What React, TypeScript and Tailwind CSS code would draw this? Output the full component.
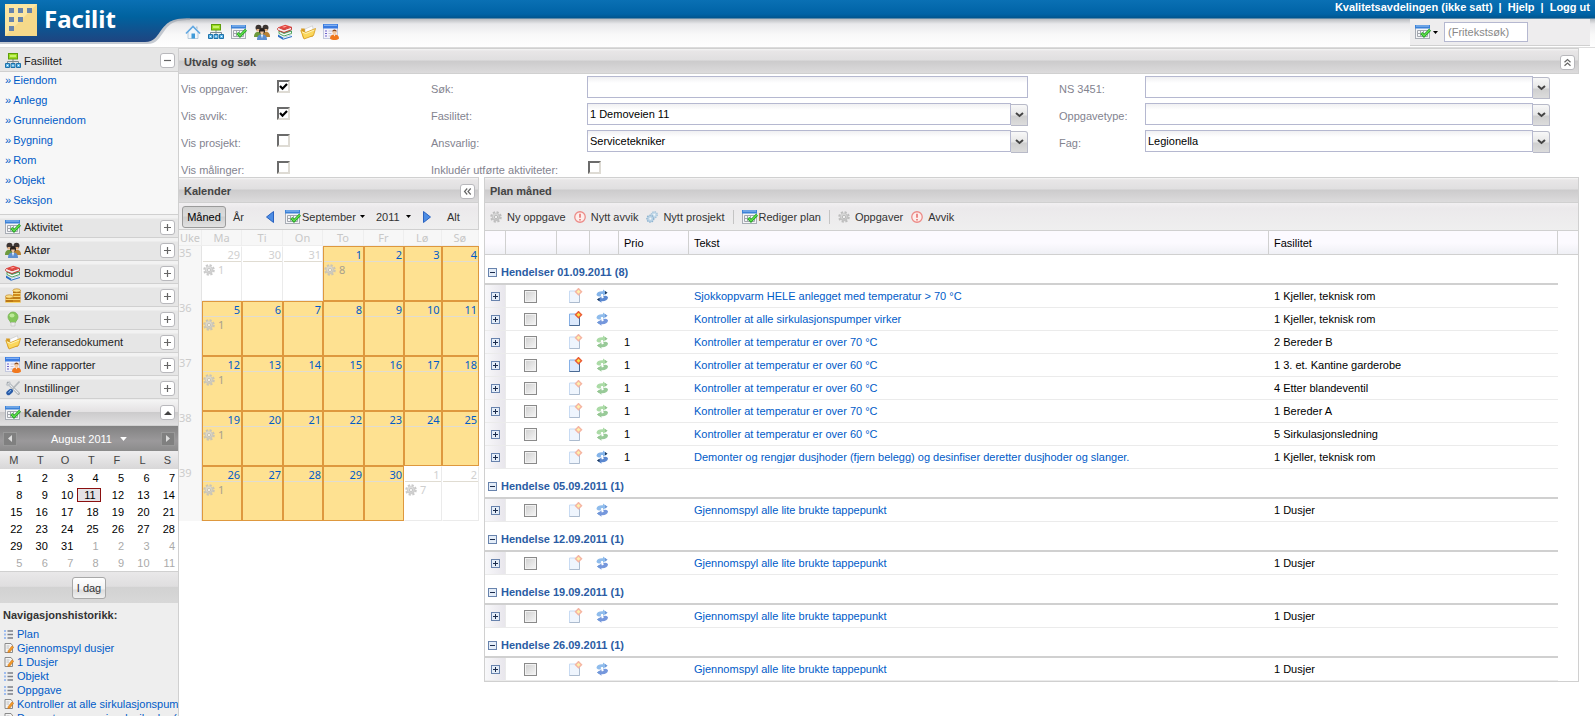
import React from 'react'

type IconProps = { className?: string }
type IconType = React.FC<IconProps>

const Icon: React.FC<{ className?: string; children: React.ReactNode }> = ({ className = 'w-4 h-4', children }) => (
  <svg viewBox="0 0 16 16" aria-hidden="true" className={`shrink-0 ${className}`}>{children}</svg>
)

const HomeIcon: IconType = () => (
  <Icon>
    <path d="M3 8v6.500h10V8L8 3z" fill="#f1f6fa" stroke="#a9c2d6" strokeWidth=".8" />
    <path d="M1 9.500 8 2.500l7 7" fill="none" stroke="#63a9e2" strokeWidth="1.700" />
    <rect x="6.500" y="9.500" width="3.500" height="5" fill="#3f9ad8" />
    <path d="M11 2.500h1.600v3L11 4z" fill="#b6c6d3" />
  </Icon>
)

const SitemapIcon: IconType = () => (
  <Icon>
    <path d="M8 6v4M2.500 11V8.500h11V11" fill="none" stroke="#7c8b93" />
    <rect x="3.500" y=".5" width="9" height="5.500" fill="#9bdc1e" stroke="#5f9e0c" />
    <path d="M5 2h6v2H5z" fill="#c6f26a" />
    <path d="M.5 10.500h4v4h-4zM6 10.500h4v4H6zM11.500 10.500h4v4h-4z" fill="#68bcec" stroke="#1f71a8" />
    <path d="M2 12h1v1H2zM7.500 12h1v1h-1zM13 12h1v1h-1z" fill="#fff" />
  </Icon>
)

const CalendarIcon: IconType = () => (
  <Icon>
    <rect x=".5" y="1.500" width="14" height="13" fill="#f4f5f7" stroke="#a8adb5" />
    <rect x="0" y="1" width="15" height="3.500" fill="#3c82d8" />
    <rect x="1" y="1.500" width="13" height="1" fill="#9cc5f3" />
    <path d="M2.500 6.500h10v6h-10zM2.500 9.500h10M5.500 6.500v6M8.500 6.500v6" fill="none" stroke="#a3a7ae" />
    <path d="m6.300 9 2.700 3 6-6.200" fill="none" stroke="#1d9a20" strokeWidth="2.800" />
    <path d="m6.600 9.200 2.400 2.500L14.700 6" fill="none" stroke="#62e34c" strokeWidth="1.300" />
  </Icon>
)

const PeopleIcon: IconType = () => (
  <Icon>
    <path d="M0 13c0-3 1-5 4-5s4 2 4 5z" fill="#6e9a3c" />
    <path d="M8 13c0-3 1-5 4-5s4 2 4 5z" fill="#b98232" />
    <circle cx="4.500" cy="3.800" r="3" fill="#3c3532" />
    <circle cx="11.500" cy="3.800" r="3" fill="#3c3532" />
    <path d="M2.500 5h3.500v2.500H2.500zM10 5h3.500v2.500H10z" fill="#e3b183" />
    <path d="M3 16c0-4 1.500-5.500 5-5.500s5 1.500 5 5.500z" fill="#5d8fd0" />
    <circle cx="8" cy="7" r="3" fill="#26201e" />
    <path d="M6.200 7.500h3.600c0 2-.8 3-1.800 3s-1.800-1-1.800-3z" fill="#f2c69c" />
    <path d="m7 10.800 1 3.700 1-3.700z" fill="#fff" />
  </Icon>
)

const BooksIcon: IconType = () => (
  <Icon>
    <path d="m1 10.500 5 3 9-2.700v2.200l-9 2.800-5-3z" fill="#2a6fc4" />
    <path d="m6 13.500 9-2.700v1.200l-9 2.700z" fill="#e8f1fb" />
    <path d="m2 7 5 2.500 7.500-2.500v2.500L7 12 2 9.500z" fill="#fafafa" stroke="#27913a" strokeWidth=".8" />
    <path d="m2 6.800 7-2 5.500 2L7 9.300z" fill="#3c9b6a" />
    <path d="M1.500 3.500C0 4.500.5 6 1.500 6.500L7 8.500l7.500-2.800V3.200L7 5.800z" fill="#f8eeee" stroke="#c22b28" strokeWidth=".9" />
    <path d="m1.200 3.300 7-2.500 6.300 2-7.500 3z" fill="#e0453f" />
    <path d="m5 2.900 3-1 2 .6-3 1.100z" fill="#ffb0a8" />
  </Icon>
)

const FolderIcon: IconType = () => (
  <Icon>
    <path d="M1 4.500h3.500L6 6l6-2.500 1 9L3 14z" fill="#d79a20" />
    <path d="m5 5 7.500-3.200 1 5.700L5 11z" fill="#fdfdfd" stroke="#b9b9b9" strokeWidth=".5" />
    <path d="m.8 6.500 5 2L15.500 4.500 13.500 11.500l-9.500 3.500z" fill="#fbd75c" stroke="#d59a1c" strokeWidth=".8" />
    <path d="M2 7.800 5.800 9.500 14.300 6" fill="none" stroke="#fff3b8" />
  </Icon>
)

const ReportIcon: IconType = () => (
  <Icon>
    <rect x=".5" y=".5" width="14" height="14" fill="#f3f2fb" stroke="#c3c9de" />
    <path d="M0 0h15v4.500H0z" fill="#3a7be0" />
    <path d="M1 .7h13v1.200H1z" fill="#8bb7f5" />
    <path d="M2 7h2M2 9.500h2M2 12h2" stroke="#6d62c9" />
    <path d="M5.500 7h4M5.500 9.500h3M5.500 12h3" stroke="#c6c4d6" />
    <circle cx="11.500" cy="8" r="2.200" fill="#f5c9a0" />
    <path d="M9.300 7.500c0-2.800 4.400-2.800 4.400 0-1.500-.8-2.900-.8-4.400 0z" fill="#8a4a20" />
    <path d="M7 14.500c0-2.800 1.500-4 4.500-4s4.500 1.200 4.500 4c-2 2-7 2-9 0z" fill="#f0781e" />
    <path d="m10.700 10.500.8 2 .8-2z" fill="#fff" />
  </Icon>
)

const CoinsIcon: IconType = () => (
  <Icon>
    <path d="M8 2.500v12h7.500v-12z" fill="#d08c1c" />
    <path d="M.5 8.500v6H8v-6z" fill="#c98518" />
    <path d="M8 5.500h7.500M8 8.500h7.500M8 11.500h7.500M.5 11.500H8M.5 14.500h15" stroke="#f8d773" />
    <path d="M8 4.500h7.500M8 10h7.500M.5 13H8" stroke="#9a5d10" strokeWidth=".6" />
    <ellipse cx="11.700" cy="2.500" rx="3.800" ry="1.700" fill="#fbe08a" stroke="#b97a18" strokeWidth=".6" />
    <ellipse cx="4.200" cy="8.500" rx="3.800" ry="1.700" fill="#fbe08a" stroke="#b97a18" strokeWidth=".6" />
  </Icon>
)

const BulbIcon: IconType = () => (
  <Icon>
    <path d="M8 1a5 5 0 0 0-5 5c0 2.500 2 3.500 2.600 5.500h4.800C11 9.500 13 8.500 13 6a5 5 0 0 0-5-5z" fill="#84c65a" stroke="#79b357" strokeWidth=".8" />
    <ellipse cx="7" cy="4.500" rx="2.500" ry="2" fill="#bdea98" />
    <path d="M6 11.500h4V15H6z" fill="#ececec" stroke="#c0c0c0" strokeWidth=".6" />
  </Icon>
)

const ToolsIcon: IconType = () => (
  <Icon>
    <path d="m3 3 10.500 10.500" stroke="#9da3a8" strokeWidth="2.600" strokeLinecap="round" />
    <path d="m3 3 10.500 10.500" stroke="#eceef0" strokeWidth="1.200" />
    <path d="M.8 4.500C1.500 6.500 4 6.800 5.200 5.500 6.500 4 6 1.800 4 1v2.600H1z" fill="#c3c8cc" />
    <path d="m14.500 1.500-8 8.500" stroke="#b2b7bb" strokeWidth="1.800" />
    <path d="m5.800 11-2.300 2" stroke="#2a5ca8" strokeWidth="4.400" strokeLinecap="round" />
    <path d="m6 10-2.500 3" stroke="#8cbcf0" strokeWidth="1" />
  </Icon>
)

const GearIcon: IconType = ({ className }) => (
  <Icon className={className}>
    <circle cx="8" cy="8" r="6.200" fill="none" stroke="#bdbdbd" strokeWidth="3" strokeDasharray="2.800 2.070" />
    <circle cx="8" cy="8" r="5.600" fill="#c2c2c2" />
    <circle cx="7.500" cy="7" r="4" fill="#d6d6d6" />
    <circle cx="8" cy="8" r="2.200" fill="#f1f1f1" stroke="#a3a3a3" strokeWidth=".8" />
  </Icon>
)

const GearsIcon: IconType = ({ className }) => (
  <Icon className={className}>
    <circle cx="11" cy="5" r="4" fill="#c6dbea" stroke="#a4c3da" strokeWidth="1.800" strokeDasharray="1.800 1.340" />
    <circle cx="11" cy="5" r="1.300" fill="#f2f7fa" />
    <circle cx="5.800" cy="10.300" r="4.600" fill="#b9d2e5" stroke="#8fb4d0" strokeWidth="1.800" strokeDasharray="1.900 1.398" />
    <circle cx="5.800" cy="10.300" r="1.500" fill="#f2f7fa" />
  </Icon>
)

const AlertIcon: IconType = ({ className }) => (
  <Icon className={className}>
    <circle cx="8" cy="8" r="7" fill="#fdeeec" stroke="#ec8b88" strokeWidth="1.700" />
    <path d="M8 3.500v5.500M8 10.500v2" stroke="#e86a66" strokeWidth="2" />
  </Icon>
)

const NoteIcon: React.FC<{ active?: boolean }> = ({ active }) => (
  <Icon className={active ? 'w-4 h-4' : 'w-4 h-4 opacity-45'}>
    <path d="M2.500 3h10v11.500h-10z" fill="#dce9fc" stroke="#86b0e6" />
    <path d="M12.500 5v9.500h-10" fill="none" stroke="#4a6a94" />
    <path d="m11.500-.3 4 4-4 4-4-4z" fill="#ea5a34" />
    <path d="m11.500 1.700 2 2-2 2-2-2z" fill="#ffe04a" />
  </Icon>
)

type SyncKind = 'dark' | 'blue' | 'green'

const SYNC_COLORS: Record<SyncKind, [string, string, string]> = {
  dark: ['#84b4ea', '#5b88d0', '#1f3a5c'],
  blue: ['#8fbcec', '#7597dc', '#6f98d8'],
  green: ['#abdba6', '#98ca98', '#93c490'],
}

const SyncIcon: React.FC<{ kind: SyncKind }> = ({ kind }) => {
  const [top, bottom, tip] = SYNC_COLORS[kind]
  return (
    <Icon className="w-4 h-4">
      <path d="M2.500 6.500C3 3.800 5.500 3 9 3.200V1.500l4.500 3.300L9 7.800V6c-2 0-3 .6-1.500 2.300L5 8.500C3.500 8.300 2.500 7.500 2.500 6.500z" fill={top} />
      <path d="M14 9.800c-.5 2.700-3 3.500-6.500 3.300v1.700L3 11.500l4.500-3v1.800c2 0 3-.6 1.500-2.300l2.500-.2c1.500.2 2.500 1 2.500 2z" fill={bottom} />
      <path d="m11 3 2.500 1.800L11 6.500zM5.500 9.800 3 11.500l2.500 1.800z" fill={tip} />
    </Icon>
  )
}

const ListIcon: IconType = () => (
  <svg viewBox="0 0 10 10" aria-hidden="true" className="w-[10px] h-[10px] shrink-0">
    <path d="M0 1h2v2H0zM0 4.500h2v2H0zM0 8h2v2H0z" fill="#9dbcf0" />
    <path d="M3.500 2H9M3.500 5.500H9M3.500 9H9" stroke="#7c7f88" strokeWidth="1.300" />
  </svg>
)

const EditIcon: IconType = () => (
  <svg viewBox="0 0 10 10" aria-hidden="true" className="w-[10px] h-[10px] shrink-0">
    <path d="M1 .5h6l1.500 2v7H1z" fill="#f4f4f4" stroke="#8b8b8b" />
    <path d="M2.500 3h3M2.500 5h2.500" stroke="#b0b0b0" strokeWidth=".8" />
    <path d="m4 7.800 4-5 1.800 1.400-4 5-2 .6z" fill="#f29a2a" stroke="#b8661a" strokeWidth=".4" />
  </svg>
)

const ExpandIcon: React.FC<{ open?: boolean }> = ({ open }) => (
  <svg viewBox="0 0 9 9" aria-hidden="true" className="w-[9px] h-[9px] shrink-0">
    <rect x=".5" y=".5" width="8" height="8" fill="#e4edf8" stroke="#6883ad" />
    <path d={open ? 'M2 4.500h5' : 'M2 4.500h5M4.500 2v5'} stroke="#1b2c4d" />
  </svg>
)

const Caret: React.FC<{ className?: string }> = ({ className = 'w-[5px] h-[3px]' }) => (
  <svg viewBox="0 0 5 3" aria-hidden="true" className={className}><path d="M0 0h5L2.500 3z" fill="currentColor" /></svg>
)

const Arrow: React.FC<{ flip?: boolean }> = ({ flip }) => (
  <svg viewBox="0 0 8 12" aria-hidden="true" className="w-2 h-3">
    <path d={flip ? 'M.5.5v11l7-5.500z' : 'M7.500.5v11L.5 6z'} fill="#4d8de4" stroke="#2a62c0" />
  </svg>
)

const toolButton = 'flex items-center justify-center w-[15px] h-[15px] shrink-0 rounded-[3px] border border-[#b8b8bc] bg-white text-[#666]'

const ToolButton: React.FC<{ label: string; d: string }> = ({ label, d }) => (
  <button type="button" aria-label={label} className={toolButton}>
    <svg viewBox="0 0 9 9" aria-hidden="true" className="w-[9px] h-[9px]"><path d={d} fill="none" stroke="currentColor" strokeWidth="1.200" /></svg>
  </button>
)

const PLUS = 'M1 4.500h7M4.500 1v7'
const MINUS = 'M1 4.500h7'
const UP = 'M1.500 4.200l3-2.700 3 2.700M1.500 7.700l3-2.700 3 2.700'
const LEFT = 'M4.200 1.500l-2.700 3 2.700 3M7.700 1.500l-2.700 3 2.700 3'

const panelHead = 'flex items-center justify-between h-[26px] pt-[2px] pl-[5px] pr-[3px] border-t border-b border-[#d0d0d0] text-[#444] font-bold bg-[linear-gradient(#f6f6f6_0,#e8e6e7_8%,#e0dfe0_46%,#cccbcc_50%,#dcdbdc_100%)]'

const MODULES: { name: string; icon: IconType }[] = [
  { name: 'Aktivitet', icon: CalendarIcon },
  { name: 'Aktør', icon: PeopleIcon },
  { name: 'Bokmodul', icon: BooksIcon },
  { name: 'Økonomi', icon: CoinsIcon },
  { name: 'Enøk', icon: BulbIcon },
  { name: 'Referansedokument', icon: FolderIcon },
  { name: 'Mine rapporter', icon: ReportIcon },
  { name: 'Innstillinger', icon: ToolsIcon },
]

const LINKS = ['Eiendom', 'Anlegg', 'Grunneiendom', 'Bygning', 'Rom', 'Objekt', 'Seksjon']

const HISTORY: { text: string; icon: IconType }[] = [
  { text: 'Plan', icon: ListIcon },
  { text: 'Gjennomspyl dusjer', icon: EditIcon },
  { text: '1 Dusjer', icon: EditIcon },
  { text: 'Objekt', icon: ListIcon },
  { text: 'Oppgave', icon: ListIcon },
  { text: 'Kontroller at alle sirkulasjonspum', icon: EditIcon },
  { text: 'Demonter og rengjør dusjhoder (', icon: EditIcon },
]

type Event = { note?: boolean; sync: SyncKind; prio?: string; text: string; place: string }

const GROUPS: { title: string; rows: Event[] }[] = [
  {
    title: 'Hendelser 01.09.2011 (8)',
    rows: [
      { sync: 'dark', text: 'Sjokkoppvarm HELE anlegget med temperatur > 70 °C', place: '1 Kjeller, teknisk rom' },
      { note: true, sync: 'blue', text: 'Kontroller at alle sirkulasjonspumper virker', place: '1 Kjeller, teknisk rom' },
      { sync: 'green', prio: '1', text: 'Kontroller at temperatur er over 70 °C', place: '2 Bereder B' },
      { note: true, sync: 'green', prio: '1', text: 'Kontroller at temperatur er over 60 °C', place: '1 3. et. Kantine garderobe' },
      { sync: 'green', prio: '1', text: 'Kontroller at temperatur er over 60 °C', place: '4 Etter blandeventil' },
      { sync: 'green', prio: '1', text: 'Kontroller at temperatur er over 70 °C', place: '1 Bereder A' },
      { sync: 'green', prio: '1', text: 'Kontroller at temperatur er over 60 °C', place: '5 Sirkulasjonsledning' },
      { sync: 'dark', prio: '1', text: 'Demonter og rengjør dusjhoder (fjern belegg) og desinfiser deretter dusjhoder og slanger.', place: '1 Kjeller, teknisk rom' },
    ],
  },
  { title: 'Hendelse 05.09.2011 (1)', rows: [{ sync: 'blue', text: 'Gjennomspyl alle lite brukte tappepunkt', place: '1 Dusjer' }] },
  { title: 'Hendelse 12.09.2011 (1)', rows: [{ sync: 'blue', text: 'Gjennomspyl alle lite brukte tappepunkt', place: '1 Dusjer' }] },
  { title: 'Hendelse 19.09.2011 (1)', rows: [{ sync: 'blue', text: 'Gjennomspyl alle lite brukte tappepunkt', place: '1 Dusjer' }] },
  { title: 'Hendelse 26.09.2011 (1)', rows: [{ sync: 'blue', text: 'Gjennomspyl alle lite brukte tappepunkt', place: '1 Dusjer' }] },
]

// September 2011 starts on a Thursday, so the first cell is 29 August
const WEEKS = [35, 36, 37, 38, 39].map((week, w) => ({
  week,
  days: Array.from({ length: 7 }, (_, d) => {
    const n = w * 7 + d - 2
    if (n < 1) return { n: n + 31, inMonth: false, count: n === -2 ? 1 : 0 }
    if (n > 30) return { n: n - 30, inMonth: false, count: n === 31 ? 7 : 0 }
    return { n, inMonth: true, count: n === 1 ? 8 : d === 0 ? 1 : 0 }
  }),
}))

const Header = () => (
  <header className="relative h-12 shrink-0 border-b border-[#dcdcdc] bg-[linear-gradient(#0a70b4_0,#0063a6_14px,#00558f_18px,#b9bcc0_19px,#e9e9eb_24px,#f8f8f8_34px,#fff_100%)]">
    <svg viewBox="0 0 190 48" aria-hidden="true" className="absolute left-0 top-0 w-[190px] h-12">
      <defs>
        <linearGradient id="brand" x1="0" y1="0" x2="0" y2="1">
          <stop offset="0" stopColor="#0a70b4" />
          <stop offset=".4" stopColor="#00629f" />
          <stop offset="1" stopColor="#1f4480" />
        </linearGradient>
      </defs>
      <path d="M0 0h190v20c-17 0-20 4-25 10-6 8-8 14-18 14H0z" fill="#8f99a8" opacity=".5" />
      <path d="M0 0h190v18c-18 0-22 4-28 11-5 7-8 13-17 13H0z" fill="url(#brand)" />
      <rect x="5" y="4" width="32" height="32" fill="#fbe6a2" />
      <path d="M5 36 37 4v32z" fill="#f5d98a" />
      <path d="M9 8h5v5H9zM18 8h5v5h-5zM27 8h5v5h-5zM9 17h5v5H9zM18 17h5v5h-5zM9 26h5v5H9z" fill="#6784ac" />
    </svg>
    <div className="relative flex justify-between">
      <div className="flex">
        <a href="#" className="w-[185px] pl-11 pt-[3px] text-2xl leading-8 font-bold text-white font-['Noto_Sans',sans-serif]">Facilit</a>
        <nav className="flex gap-[7px] pt-6">
          {[HomeIcon, SitemapIcon, CalendarIcon, PeopleIcon, BooksIcon, FolderIcon, ReportIcon].map((I, i) => (
            <a key={i} href="#"><I /></a>
          ))}
        </nav>
      </div>
      <div className="flex flex-col items-end pr-[5px]">
        <div className="flex gap-[6px] h-[19px] leading-[15px] font-bold text-white">
          <a href="#">Kvalitetsavdelingen (ikke satt)</a>
          <span>|</span>
          <a href="#">Hjelp</a>
          <span>|</span>
          <a href="#">Logg ut</a>
        </div>
        <div className="flex items-center w-[180px] h-[27px] pl-[5px] bg-[#eeedee] border-b border-[#d0d0d0]">
          <button type="button" aria-label="Velg søk" className="flex items-center gap-[2px]"><CalendarIcon /><Caret /></button>
          <input aria-label="Fritekstsøk" placeholder="(Fritekstsøk)" className="ml-[6px] w-[84px] h-5 px-[3px] bg-white border border-[#b5b8d0] placeholder:text-[#888] placeholder:opacity-100" />
        </div>
      </div>
    </div>
  </header>
)

const MiniCalendar = () => {
  const days = Array.from({ length: 42 }, (_, i) => (i < 31 ? i + 1 : i - 30))
  return (
    <section>
      <div className="flex items-center gap-[3px] h-[26px] pl-[5px] pr-[3px] border-b border-[#d0d0d0] font-bold text-[#444] bg-[linear-gradient(#f4f4f4_0,#e4e2e3_46%,#cccbcc_50%,#e0dfe0_100%)]">
        <CalendarIcon />
        <span className="flex-1">Kalender</span>
        <button type="button" aria-label="Skjul kalender" className={toolButton}>
          <svg viewBox="0 0 8 4" aria-hidden="true" className="w-2 h-1"><path d="M0 4h8L4 0z" fill="#444" /></svg>
        </button>
      </div>
      <div className="flex items-center justify-between h-[25px] px-[3px] text-white bg-[linear-gradient(#828282,#9b999b_60%,#8b8b8b)]">
        <button type="button" aria-label="Forrige måned" className="flex items-center justify-center w-[14px] h-[14px] border border-[#999] bg-[#808080]">
          <svg viewBox="0 0 4 7" aria-hidden="true" className="w-1 h-[7px]"><path d="M4 0v7L0 3.500z" fill="#ddd" /></svg>
        </button>
        <button type="button" className="flex items-center gap-2">August 2011 <Caret className="w-[7px] h-1" /></button>
        <button type="button" aria-label="Neste måned" className="flex items-center justify-center w-[14px] h-[14px] border border-[#999] bg-[#808080]">
          <svg viewBox="0 0 4 7" aria-hidden="true" className="w-1 h-[7px]"><path d="M0 0v7l4-3.500z" fill="#ddd" /></svg>
        </button>
      </div>
      <table className="w-full table-fixed bg-white text-right">
        <thead>
          <tr className="h-[18px] bg-[linear-gradient(#efeeef,#d8d7d8)] text-[#444]">
            {['M', 'T', 'O', 'T', 'F', 'L', 'S'].map((d, i) => <th key={i} className="p-0 pr-[7px] font-normal">{d}</th>)}
          </tr>
        </thead>
        <tbody>
          {[0, 1, 2, 3, 4, 5].map((w) => (
            <tr key={w} className="h-[17px]">
              {days.slice(w * 7, w * 7 + 7).map((n, d) => {
                const i = w * 7 + d
                return (
                  <td key={d} className={`p-0 px-px ${i > 30 ? 'text-[#aaa]' : 'text-black'}`}>
                    <a href="#" className={i === 10 ? 'block pr-[4px] leading-3 border border-[#8b1010] bg-[#e4e2e5]' : 'block pr-[2px] leading-[14px]'}>{n}</a>
                  </td>
                )
              })}
            </tr>
          ))}
        </tbody>
      </table>
      <div className="flex justify-center items-center h-8 pt-px border-t border-[#d0d0d0] bg-[linear-gradient(#e9e8e9_0,#dfdedf_46%,#d2d2d2_50%,#d8d8d8_100%)]">
        <button type="button" className="h-[22px] px-1 rounded-[3px] border border-[#a8a8a8] text-[#333] bg-[linear-gradient(#fff,#f2f2f2_55%,#dcdcdc_60%,#f0f0f0)]">I dag</button>
      </div>
    </section>
  )
}

const Sidebar = () => (
  <aside className="w-[179px] shrink-0 overflow-hidden border-r border-[#d0d0d0] bg-[#eee]">
    <div className="flex items-center gap-[3px] h-6 pt-[2px] pl-[5px] pr-[3px] bg-[#e6e6e6] border-b border-[#d0d0d0] text-[#222]">
      <SitemapIcon />
      <span className="flex-1">Fasilitet</span>
      <ToolButton label="Skjul" d={MINUS} />
    </div>
    <ul className="h-[142px] bg-[#f7f7f7]">
      {LINKS.map((l) => (
        <li key={l} className="h-5 pl-[5px] leading-4 text-[#005bc8]"><a href="#" className="flex gap-[2px]"><span>»</span><span>{l}</span></a></li>
      ))}
    </ul>
    {MODULES.map(({ name, icon: I }) => (
      <div key={name} className="flex items-center gap-[3px] h-[23px] pt-[2px] pl-[5px] pr-[3px] border-t border-[#d0d0d0] bg-[linear-gradient(#f2f2f2_3px,#e6e6e6_4px)] text-[#222]">
        <I />
        <span className="flex-1">{name}</span>
        <ToolButton label={`Vis ${name}`} d={PLUS} />
      </div>
    ))}
    <div className="border-t border-[#d0d0d0] pt-px">
      <MiniCalendar />
    </div>
    <h2 className="pl-[3px] pt-[5px] leading-[15px] font-bold text-[#333]">Navigasjonshistorikk:</h2>
    <ul className="pt-1">
      {HISTORY.map(({ text, icon: I }) => (
        <li key={text} className="h-[14px] leading-[14px] text-[#005bc8]">
          <a href="#" className="flex items-center gap-[3px] pl-1 whitespace-nowrap"><I />{text}</a>
        </li>
      ))}
    </ul>
  </aside>
)

const CheckField: React.FC<{ id: string; label: string; checked?: boolean; wide?: boolean }> = ({ id, label, checked, wide }) => (
  <div className="flex h-[27px]">
    <label htmlFor={id} className={`pt-[7px] text-[#83838f] ${wide ? 'w-[157px]' : 'w-24'}`}>{label}</label>
    <span className="relative w-[13px] h-[13px] mt-[5px]">
      <input id={id} type="checkbox" defaultChecked={checked} className="peer block appearance-none w-[13px] h-[13px] bg-white border-2 border-t-[#6b6b6b] border-l-[#6b6b6b] border-r-[#dedbd4] border-b-[#dedbd4]" />
      <svg viewBox="0 0 13 13" aria-hidden="true" className="hidden peer-checked:block absolute inset-0 pointer-events-none"><path d="M3 6l2.500 2.700L10 4" fill="none" stroke="#000" strokeWidth="2.200" /></svg>
    </span>
  </div>
)

const field = 'min-w-0 flex-1 h-[22px] px-[2px] appearance-none rounded-none border border-[#b5b8d0] bg-[linear-gradient(#f0f0f2,#fff_6px)] text-black'

const SelectField: React.FC<{ id: string; label: string; value?: string; narrow?: boolean }> = ({ id, label, value = '', narrow }) => (
  <div className="flex h-[27px]">
    <label htmlFor={id} className={`shrink-0 pt-[7px] text-[#83838f] ${narrow ? 'w-[86px]' : 'w-[156px]'}`}>{label}</label>
    <select id={id} defaultValue={value} className={`${field} mt-px`}>
      <option>{value}</option>
    </select>
    <span className="flex items-center justify-center w-[17px] h-[22px] mt-[2px] border border-l-0 border-[#b8bac8] rounded-tr-[3px] bg-[linear-gradient(#f8f8f8,#e6e6e6_50%,#cfcfcf_55%,#dcdcdc)]">
      <svg viewBox="0 0 9 6" aria-hidden="true" className="w-[9px] h-[6px]"><path d="m1 1 3.500 3L8 1" fill="none" stroke="#444" strokeWidth="2" /></svg>
    </span>
  </div>
)

const SearchPanel = () => (
  <section className="h-[129px]">
    <h2 className={`${panelHead} border-r`}>Utvalg og søk <ToolButton label="Skjul søk" d={UP} /></h2>
    <div className="flex pt-px pl-[2px] pr-[29px]">
      <div className="w-[250px]">
        <CheckField id="oppgaver" label="Vis oppgaver:" checked />
        <CheckField id="avvik" label="Vis avvik:" checked />
        <CheckField id="prosjekt" label="Vis prosjekt:" />
        <CheckField id="malinger" label="Vis målinger:" />
      </div>
      <div className="flex-[597] min-w-0">
        <div className="flex h-[27px]">
          <label htmlFor="sok" className="w-[156px] shrink-0 pt-[7px] text-[#83838f]">Søk:</label>
          <input id="sok" className={`${field} mt-px`} />
        </div>
        <SelectField id="fasilitet" label="Fasilitet:" value="1 Demoveien 11" />
        <SelectField id="ansvarlig" label="Ansvarlig:" value="Servicetekniker" />
        <CheckField id="utforte" label="Inkludér utførte aktiviteter:" wide />
      </div>
      <div className="flex-[491] min-w-0 ml-[31px]">
        <SelectField id="ns" label="NS 3451:" narrow />
        <SelectField id="type" label="Oppgavetype:" narrow />
        <SelectField id="fag" label="Fag:" value="Legionella" narrow />
      </div>
    </div>
  </section>
)

const toolbar = 'flex items-center border-b border-[#d0d0d0] bg-[linear-gradient(#f2f0f2,#ebe9eb_5px,#efefef)] text-[#333]'

const CalendarPanel = () => (
  <section className="w-[300px] shrink-0">
    <div className="border-r border-[#d0d0d0]">
      <h2 className={panelHead}>Kalender <ToolButton label="Skjul kalender" d={LEFT} /></h2>
      <div className={`${toolbar} h-[27px] pt-px pl-[3px]`}>
        <button type="button" className="w-11 h-[22px] rounded-[3px] border border-[#9b9b9b] bg-[linear-gradient(#d2d2d2,#dcdcdc_45%,#cecece_50%,#e2e2e2)] text-black">Måned</button>
        <button type="button" className="ml-[7px] w-[33px] text-left">År</button>
        <button type="button" aria-label="Forrige" className="w-[19px]"><Arrow /></button>
        <button type="button" className="flex items-center gap-px w-[91px]"><CalendarIcon />September <Caret className="w-[5px] h-[3px] ml-[3px] text-black" /></button>
        <button type="button" className="flex items-center gap-[6px] w-[47px]">2011 <Caret className="w-[5px] h-[3px] text-black" /></button>
        <button type="button" aria-label="Neste" className="w-6"><Arrow flip /></button>
        <button type="button">Alt</button>
      </div>
    </div>
    <table className="w-full table-fixed border-separate border-spacing-0 font-['Noto_Sans',sans-serif]">
      <colgroup>
        <col className="w-[23px]" />
        <col className="w-[40px]" />
        <col className="w-[41px]" />
        <col className="w-[40px]" />
        <col className="w-[41px]" />
        <col className="w-[40px]" />
        <col />
        <col />
      </colgroup>
      <thead>
        <tr className="h-4 bg-[#f7f7f7] text-[#c8c8c8]">
          {['Uke', 'Ma', 'Ti', 'On', 'To', 'Fr', 'Lø', 'Sø'].map((d) => <th key={d} className="p-0 font-normal leading-[15px] border-r border-b border-[#eee]">{d}</th>)}
        </tr>
      </thead>
      <tbody>
        {WEEKS.map(({ week, days }) => (
          <tr key={week} className="h-[55px] align-top">
            <td className="p-0 bg-[#f7f7f7] text-[#ccc] leading-[13px] border-r border-[#e4e4e4]">{week}</td>
            {days.map(({ n, inMonth, count }) => (
              <td key={n} className={`p-0 border ${inMonth ? 'border-[#de983e] bg-[#fee191]' : 'border-t-transparent border-l-transparent border-[#ebebeb] bg-white'}`}>
                <div className={`h-[15px] pr-px text-right leading-4 border-b border-[#e0dcd2] ${inMonth ? 'text-[#005bc8]' : 'text-[#d0d0d0]'}`}>{n}</div>
                {count > 0 && (
                  <div className={`flex items-center gap-[3px] leading-[15px] ${inMonth ? 'text-[#a8a08c]' : 'text-[#cfcfcf]'}`}><GearIcon className="w-3 h-3 opacity-80" />{count}</div>
                )}
              </td>
            ))}
          </tr>
        ))}
      </tbody>
    </table>
  </section>
)

const Separator = () => <span className="w-px h-[14px] bg-[#c4c4c4]" />

const ActionButton: React.FC<{ label: string; icon: IconType }> = ({ label, icon: I }) => (
  <button type="button" className="flex items-center gap-[5px]"><I className="w-3 h-3" />{label}</button>
)

const PlanPanel = () => (
  <section className="min-w-0 flex-1 ml-[5px] self-start border border-t-0 border-[#d0d0d0]">
    <h2 className={panelHead}>Plan måned</h2>
    <div className={`${toolbar} gap-2 h-[28px] pl-[5px]`}>
      <ActionButton label="Ny oppgave" icon={GearIcon} />
      <ActionButton label="Nytt avvik" icon={AlertIcon} />
      <ActionButton label="Nytt prosjekt" icon={GearsIcon} />
      <Separator />
      <button type="button" className="flex items-center gap-px"><CalendarIcon />Rediger plan</button>
      <Separator />
      <ActionButton label="Oppgaver" icon={GearIcon} />
      <ActionButton label="Avvik" icon={AlertIcon} />
    </div>
    <table className="w-full table-fixed border-separate border-spacing-0">
      <colgroup>
        <col className="w-[21px]" />
        <col className="w-[51px]" />
        <col className="w-[33px]" />
        <col className="w-[29px]" />
        <col className="w-[70px]" />
        <col />
        <col className="w-[289px]" />
        <col className="w-[20px]" />
      </colgroup>
      <thead>
        <tr className="h-6 text-left bg-[linear-gradient(#fcfaff_50%,#eeeff4)]">
          {['', '', '', '', 'Prio', 'Tekst', 'Fasilitet', ''].map((h, i) => (
            <th key={i} className={`p-0 pl-[5px] font-normal border-b border-[#d0d0d0] ${i < 7 ? 'border-r' : ''}`}>{h}</th>
          ))}
        </tr>
      </thead>
      {GROUPS.map(({ title, rows }) => (
        <tbody key={title}>
          <tr className="h-[30px]">
            <th colSpan={7} className="p-0 pl-[3px] pt-[6px] text-left text-[#2a5ca4] border-b-2 border-[#d0d0d0]">
              <button type="button" className="flex items-center gap-1 font-bold"><ExpandIcon open />{title}</button>
            </th>
            <td />
          </tr>
          {rows.map((row, i) => (
            <tr key={i} className="h-[23px] [&>td]:p-0 [&>td:not(:last-child)]:border-b [&>td]:border-[#ebebeb]">
              <td className="border-r bg-[linear-gradient(to_right,#f8f8fa,#e8e6ec)]"><button type="button" aria-label="Vis detaljer" className="block mx-auto"><ExpandIcon /></button></td>
              <td><input type="checkbox" aria-label={row.text} className="block ml-[18px] appearance-none w-[13px] h-[13px] border border-[#8a8a8a] bg-[linear-gradient(135deg,#cfcfcf,#f6f6f6)] shadow-[inset_0_0_0_1px_#f2f2f2]" /></td>
              <td><div className="ml-[10px]"><NoteIcon active={row.note} /></div></td>
              <td><div className="ml-1"><SyncIcon kind={row.sync} /></div></td>
              <td><span className="pl-[5px]">{row.prio}</span></td>
              <td className="truncate"><a href="#" className="pl-[5px] text-[#005bc8]">{row.text}</a></td>
              <td><span className="pl-[5px]">{row.place}</span></td>
              <td />
            </tr>
          ))}
        </tbody>
      ))}
    </table>
  </section>
)

export default function App() {
  return (
    <div className="flex flex-col h-screen overflow-hidden bg-white text-black text-[11px] leading-[14px] font-['Liberation_Sans',Arial,sans-serif]">
      <Header />
      <div className="flex flex-1 min-h-0">
        <Sidebar />
        <main className="flex-1 min-w-0 pr-4">
          <SearchPanel />
          <div className="flex">
            <CalendarPanel />
            <PlanPanel />
          </div>
        </main>
      </div>
    </div>
  )
}
